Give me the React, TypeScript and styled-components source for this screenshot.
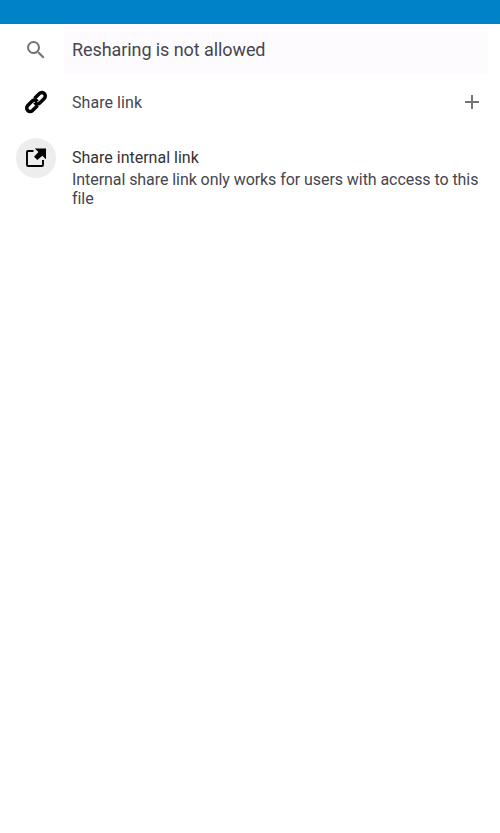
import React from 'react';
import styled, { createGlobalStyle } from 'styled-components';

const GlobalStyle = createGlobalStyle`
  * { box-sizing: border-box; }
  body { margin: 0; background: #fff; font-family: Roboto, sans-serif; }
`;

const Screen = styled.main`
  display: flex;
  flex-direction: column;
  width: 100%;
  height: 100vh;
  overflow: hidden;
  background: #fff;
`;

const StatusBar = styled.header`
  flex: none;
  height: 24px;
  background: #0082c9;
`;

const SearchRow = styled.div`
  display: flex;
  flex: none;
  align-items: center;
  height: 50px;
  padding: 2px 12px 0 0;
`;

const SearchIcon = styled.div`
  display: flex;
  width: 64px;
  padding-left: 24px;
`;

const SearchField = styled.div`
  flex: 1;
  height: 48px;
  padding-left: 8px;
  background: #fefbff;
  color: #45464f;
  font-size: 18px;
  line-height: 48px;
  letter-spacing: -0.08px;
`;

const ShareRow = styled.div<{ $tall?: boolean }>`
  display: flex;
  flex: none;
  align-items: flex-start;
  height: ${p => (p.$tall ? 80 : 56)}px;
  padding: 8px 16px 0;
`;

const Avatar = styled.div<{ $filled?: boolean }>`
  display: flex;
  flex: none;
  align-items: center;
  justify-content: center;
  width: 40px;
  height: 40px;
  margin-right: 16px;
  border-radius: 50%;
  background: ${p => (p.$filled ? '#ededed' : 'transparent')};
`;

const Label = styled.div`
  flex: 1;
  color: #45464f;
  font-size: 16px;
  line-height: 42px;
  letter-spacing: 0.06px;
`;

const TextBlock = styled.div`
  flex: 1;
  padding-top: 10px;
`;

const Title = styled.div`
  color: #333;
  font-size: 16px;
  line-height: 19px;
`;

const Description = styled.div`
  margin-top: 3px;
  color: #45464f;
  font-size: 16px;
  line-height: 19px;
  letter-spacing: -0.065px;
`;

const AddButton = styled.button`
  display: flex;
  align-items: center;
  justify-content: center;
  width: 24px;
  height: 40px;
  padding: 0;
  border: 0;
  background: none;
`;

const Icon = ({ d, color = '#000' }: { d: string; color?: string }) => (
  <svg width="24" height="24" viewBox="0 0 24 24" fill={color}>
    <path d={d} />
  </svg>
);

const SEARCH = 'M15.5 14h-.79l-.28-.27A6.47 6.47 0 0 0 16 9.5 6.5 6.5 0 1 0 9.5 16c1.61 0 3.09-.59 4.23-1.57l.27.28v.79l5 4.99L20.49 19l-4.99-5zm-6 0C7.01 14 5 11.99 5 9.5S7.01 5 9.5 5 14 7.01 14 9.5 11.99 14 9.5 14z';
const PLUS = 'M19 13h-6v6h-2v-6H5v-2h6V5h2v6h6v2z';

const ExternalIcon = () => (
  <svg width="24" height="24" viewBox="0 0 24 24">
    <path d="M9.500 5H4Q3 5 3 6V19Q3 20 4 20H18Q19 20 19 19V14" fill="none" stroke="#000" strokeWidth="1.900" />
    <path d="M10.700 2.500H22V13.300L18.300 9.700L13.300 14L10 10.800L14.500 6Z" fill="#000" />
  </svg>
);

const ChainIcon = () => (
  <svg width="24" height="24" viewBox="0 0 24 24" fill="none" stroke="#000" strokeWidth="3.500">
    <g transform="translate(12 12) rotate(-45)">
      <path d="M-1.300 3.500H-8.400a3.400 3.400 0 0 1 0-6.800H-1.700a3.300 3.300 0 0 1 3 3.900" />
      <path d="M1.300 -3.500H8.400a3.400 3.400 0 0 1 0 6.800H1.700a3.300 3.300 0 0 1-3-3.900" />
    </g>
  </svg>
);

export default function App() {
  return (
    <Screen>
      <GlobalStyle />
      <StatusBar />
      <SearchRow>
        <SearchIcon><Icon d={SEARCH} color="#737373" /></SearchIcon>
        <SearchField>Resharing is not allowed</SearchField>
      </SearchRow>
      <ShareRow>
        <Avatar><ChainIcon /></Avatar>
        <Label>Share link</Label>
        <AddButton aria-label="Create link"><Icon d={PLUS} color="#757575" /></AddButton>
      </ShareRow>
      <ShareRow $tall>
        <Avatar $filled><ExternalIcon /></Avatar>
        <TextBlock>
          <Title>Share internal link</Title>
          <Description>Internal share link only works for users with access to this file</Description>
        </TextBlock>
      </ShareRow>
    </Screen>
  );
}
